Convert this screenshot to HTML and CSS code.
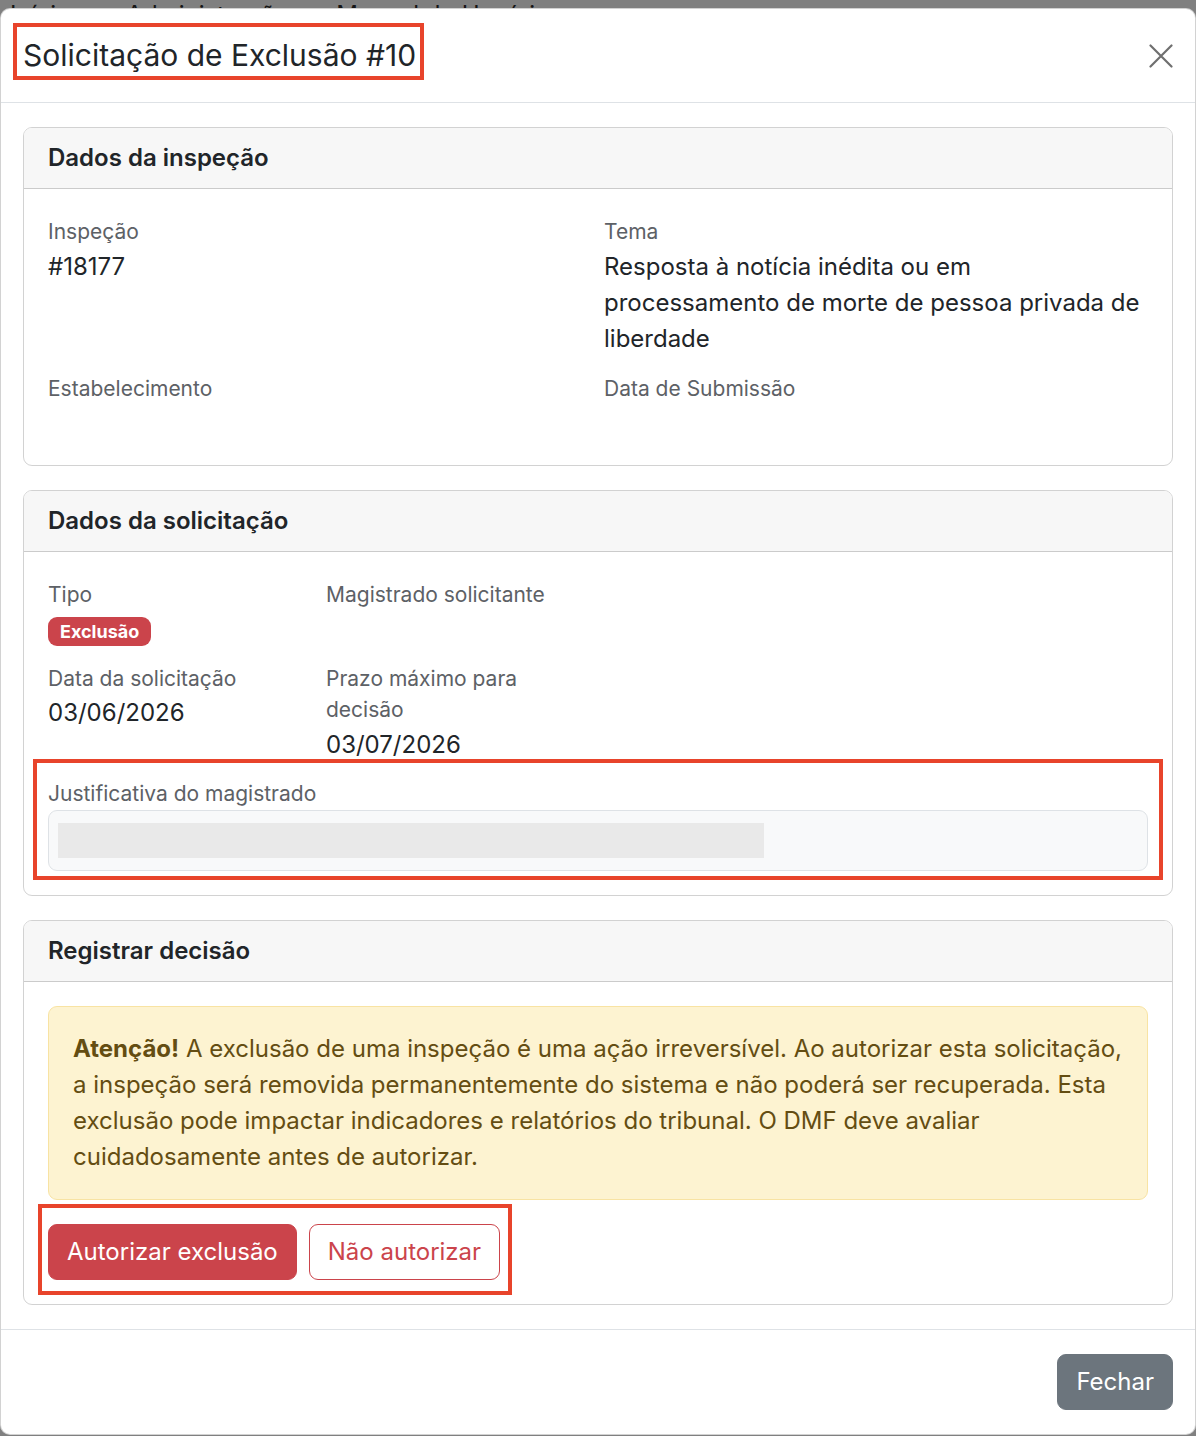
FILE: index.html
```html
<!DOCTYPE html>
<html lang="pt-BR">
<head>
<meta charset="utf-8">
<title>Solicitação de Exclusão #10</title>
<link rel="stylesheet" href="styles.css">
</head>
<body>
<div class="backdrop-strip">
  <span class="bs-word bs-1">Início</span>
  <span class="bs-word bs-2">Administração</span>
  <span class="bs-word bs-3">Manual do Usuário</span>
</div>

<div class="modal">
  <div class="modal-header">
    <h5 class="modal-title">Solicitação de Exclusão #10</h5>
    <button class="btn-close" type="button" aria-label="Fechar">
      <svg viewBox="0 0 24 24" width="24" height="24"><path d="M1.5 1.5 L22.5 22.5 M22.5 1.5 L1.5 22.5" stroke="#6f6f6f" stroke-width="2.2" stroke-linecap="round" fill="none"/></svg>
    </button>
  </div>

  <div class="modal-body">
    <section class="card">
      <div class="card-header"><h6 class="card-title">Dados da inspeção</h6></div>
      <div class="card-body">
        <div class="grid grid-2">
          <div class="field"><div class="label">Inspeção</div><div class="value">#18177</div></div>
          <div class="field"><div class="label">Tema</div><div class="value">Resposta à notícia inédita ou em processamento de morte de pessoa privada de liberdade</div></div>
          <div class="field"><div class="label">Estabelecimento</div><div class="value"></div></div>
          <div class="field"><div class="label">Data de Submissão</div><div class="value"></div></div>
        </div>
      </div>
    </section>

    <section class="card">
      <div class="card-header"><h6 class="card-title">Dados da solicitação</h6></div>
      <div class="card-body">
        <div class="grid grid-4">
          <div class="field"><div class="label">Tipo</div><div class="value value-badge"><span class="badge">Exclusão</span></div></div>
          <div class="field"><div class="label">Magistrado solicitante</div><div class="value"></div></div>
          <div class="field first-col"><div class="label">Data da solicitação</div><div class="value">03/06/2026</div></div>
          <div class="field"><div class="label">Prazo máximo para decisão</div><div class="value">03/07/2026</div></div>
          <div class="field full-row">
            <div class="label">Justificativa do magistrado</div>
            <div class="quote-box"><div class="redacted"></div></div>
          </div>
        </div>
      </div>
    </section>

    <section class="card">
      <div class="card-header"><h6 class="card-title">Registrar decisão</h6></div>
      <div class="card-body">
        <div class="alert"><strong>Atenção!</strong> A exclusão de uma inspeção é uma ação irreversível. Ao autorizar esta solicitação, a inspeção será removida permanentemente do sistema e não poderá ser recuperada. Esta exclusão pode impactar indicadores e relatórios do tribunal. O DMF deve avaliar cuidadosamente antes de autorizar.</div>
        <div class="actions">
          <button class="btn btn-danger" type="button">Autorizar exclusão</button>
          <button class="btn btn-outline-danger" type="button">Não autorizar</button>
        </div>
      </div>
    </section>
  </div>

  <div class="modal-footer">
    <button class="btn btn-secondary" type="button">Fechar</button>
  </div>
</div>

<div class="annot annot-title"></div>
<div class="annot annot-just"></div>
<div class="annot annot-actions"></div>
</body>
</html>
```

FILE: styles.css
```css
*, *::before, *::after { box-sizing: border-box; }

body {
  margin: 0;
  background: #808080;
  font-family: Inter, "Noto Sans", "Liberation Sans", sans-serif;
  color: #212529;
  position: relative;
  min-height: 1436px;
}

.backdrop-strip {
  height: 8px;
  overflow: hidden;
  display: flex;
  align-items: flex-start;
}
.bs-word {
  font-size: 24px;
  line-height: 24px;
  margin-top: 3px;
  color: #151515;
  white-space: nowrap;
}
.bs-1 { margin-left: 10px; }
.bs-2 { margin-left: 56px; }
.bs-3 { margin-left: 47px; }

.modal {
  background: #fff;
  border: 1px solid rgba(0, 0, 0, 0.175);
  border-radius: 10px;
}

.modal-header {
  display: flex;
  align-items: center;
  justify-content: space-between;
  padding: 24px 22px;
  border-bottom: 1px solid #dee2e6;
}
.modal-title {
  margin: 0;
  font-size: 30px;
  line-height: 45px;
  font-weight: 400;
}
.btn-close {
  width: 24px;
  height: 24px;
  padding: 0;
  border: 0;
  background: none;
  display: flex;
}

.modal-body { padding: 24px 22px; }

.card {
  border: 1px solid rgba(0, 0, 0, 0.175);
  border-radius: 9px;
  margin-bottom: 24px;
  overflow: hidden;
}
.card:last-child { margin-bottom: 0; }
.card-header {
  background: #f7f7f7;
  padding: 12px 24px;
  border-bottom: 1px solid rgba(0, 0, 0, 0.175);
}
.card-title {
  margin: 0;
  font-size: 24px;
  line-height: 36px;
  font-weight: 600;
}
.card-body { padding: 24px; }

.grid {
  display: grid;
  column-gap: 12px;
  row-gap: 12px;
}
.grid-2 { grid-template-columns: 1fr 1fr; row-gap: 13px; }
.grid-4 { grid-template-columns: repeat(4, 1fr); }
.first-col { grid-column: 1; }
.full-row { grid-column: 1 / -1; }

.label {
  font-size: 21px;
  line-height: 31.5px;
  padding-top: 3px;
  margin-bottom: 1px;
  color: #5d6166;
}
.value {
  font-size: 24px;
  line-height: 36px;
  min-height: 36px;
}
.value-badge {
  display: flex;
  align-items: center;
}
.badge {
  display: inline-block;
  margin-top: 4px;
  background: #cb444b;
  color: #fff;
  font-size: 18px;
  line-height: 19px;
  font-weight: 700;
  padding: 5px 12px;
  border-radius: 9px;
}

.quote-box {
  background: #f8f9fa;
  border: 1px solid #dee2e6;
  border-radius: 9px;
  padding: 12px 9px;
}
.redacted {
  width: 706px;
  height: 35px;
  background: #e9e9e9;
}

.alert {
  background: #fdf3d1;
  border: 1px solid #f8e3a3;
  color: #644d12;
  border-radius: 9px;
  padding: 24px;
  font-size: 24px;
  line-height: 36px;
  margin-bottom: 24px;
}
.alert strong { font-weight: 700; }

.actions {
  display: flex;
  gap: 12px;
}
.btn {
  font-family: inherit;
  font-size: 24px;
  line-height: 36px;
  padding: 9px 18px;
  border: 1px solid transparent;
  border-radius: 9px;
  cursor: pointer;
}
.btn-danger { background: #cb444b; border-color: #cb444b; color: #fff; }
.btn-outline-danger { background: #fff; border-color: #cb444b; color: #cb444b; }
.btn-secondary { background: #6c757d; border-color: #6c757d; color: #fff; }

.modal-footer {
  display: flex;
  justify-content: flex-end;
  padding: 24px 22px;
  border-top: 1px solid #dee2e6;
}

.annot {
  position: absolute;
  border: 4px solid #e8442b;
  pointer-events: none;
}
.annot-title { left: 13px; top: 23px; width: 411px; height: 57px; }
.annot-just { left: 33px; top: 759px; width: 1130px; height: 121px; }
.annot-actions { left: 38px; top: 1204px; width: 474px; height: 91px; }
```
